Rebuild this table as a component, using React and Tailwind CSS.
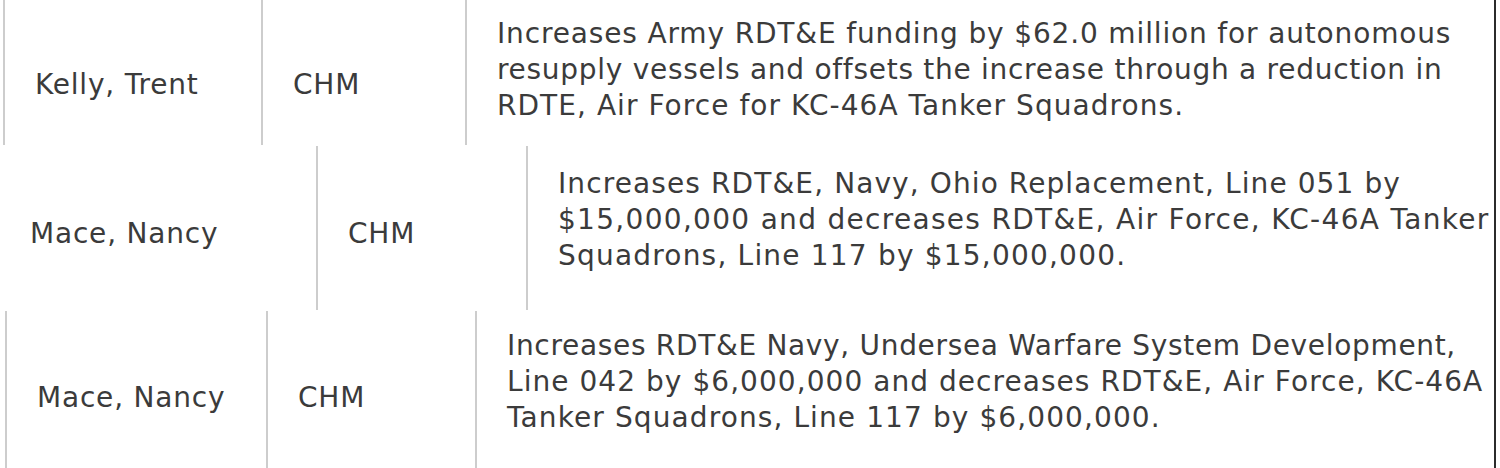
import React from 'react';

// Three amendment rows, each cut from a different table
const rows = [
  {
    name: 'Kelly, Trent',
    committee: 'CHM',
    lines: [
      ['Increases Army RDT&E funding by $62.0 million for autonomous', 'tracking-[0.85px]'],
      ['resupply vessels and offsets the increase through a reduction in', 'tracking-[0.72px]'],
      ['RDTE, Air Force for KC-46A Tanker Squadrons.', 'tracking-[1.05px]'],
    ],
    height: 'h-[145px] mb-px',
    lead: 'ml-[3px] border-l-2',
    nameCol: 'w-[258px] pt-[67px]',
    codeCol: 'w-[204px] pt-[67px]',
    descPad: 'pt-[16px]',
  },
  {
    name: 'Mace, Nancy',
    committee: 'CHM',
    lines: [
      ['Increases RDT&E, Navy, Ohio Replacement, Line 051 by', 'tracking-[1.1px]'],
      ['$15,000,000 and decreases RDT&E, Air Force, KC-46A Tanker', 'tracking-[1.3px]'],
      ['Squadrons, Line 117 by $15,000,000.', 'tracking-[1.2px]'],
    ],
    height: 'h-[164px] mb-px',
    lead: 'ml-0',
    nameCol: 'w-[316px] pt-[70px]',
    codeCol: 'w-[210px] pt-[70px]',
    descPad: 'pt-[20px]',
  },
  {
    name: 'Mace, Nancy',
    committee: 'CHM',
    lines: [
      ['Increases RDT&E Navy, Undersea Warfare System Development,', 'tracking-[0.68px]'],
      ['Line 042 by $6,000,000 and decreases RDT&E, Air Force, KC-46A', 'tracking-[1.05px]'],
      ['Tanker Squadrons, Line 117 by $6,000,000.', 'tracking-[1.1px]'],
    ],
    height: 'h-[157px]',
    lead: 'ml-[5px] border-l-2',
    nameCol: 'w-[261px] pt-[69px]',
    codeCol: 'w-[209px] pt-[69px]',
    descPad: 'pt-[17px]',
  },
];

export default function App() {
  return (
    <div
      className="w-[1496px] h-[468px] overflow-hidden bg-white border-r-2 border-[#2b2b2b] text-[28px] leading-[36px] tracking-[0.8px] text-[#3b3b3b] whitespace-nowrap"
      style={{ fontFamily: '"DejaVu Sans", Verdana, sans-serif' }}
    >
      {rows.map((row, i) => (
        <div key={i} className={`flex ${row.height}`}>
          <div className={`${row.lead} ${row.nameCol} border-[#cdcdcd] pl-[30px] shrink-0`}>
            {row.name}
          </div>
          <div className={`${row.codeCol} border-l-2 border-[#cdcdcd] pl-[30px] shrink-0`}>
            {row.committee}
          </div>
          <div className={`flex-1 border-l-2 border-[#cdcdcd] pl-[30px] ${row.descPad}`}>
            {row.lines.map(([text, spacing], j) => (
              <div key={j} className={spacing}>{text}</div>
            ))}
          </div>
        </div>
      ))}
    </div>
  );
}
